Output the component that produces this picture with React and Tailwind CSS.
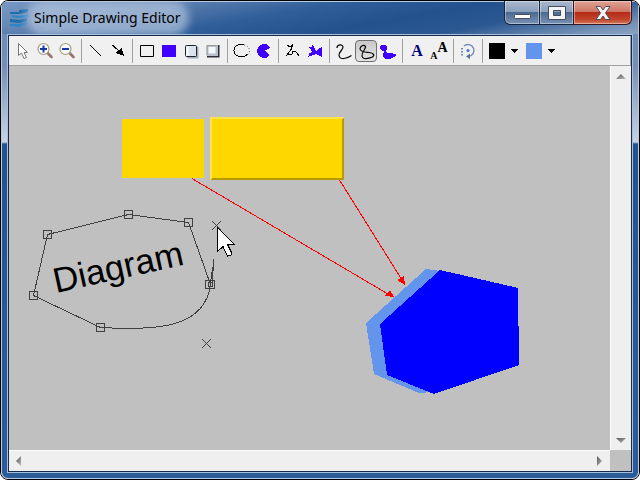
import { useState } from "react";

function Tool({ label, pressed, children }) {
  return (
    <button
      type="button"
      aria-label={label}
      title={label}
      className={
        pressed
          ? "h-[22px] w-[22px] shrink-0 rounded-sm border border-[#6e6e6e] bg-linear-to-b from-[#c9c9c9] to-[#e4e4e4]"
          : "h-[22px] w-[22px] shrink-0"
      }
    >
      <svg
        viewBox="0 0 22 22"
        className={pressed ? "-m-px block h-[22px] w-[22px] max-w-none" : "block h-[22px] w-[22px]"}
        fill="none"
        stroke="#000"
      >
        {children}
      </svg>
    </button>
  );
}

function Separator() {
  return <div className="mx-[3px] h-6 w-px shrink-0 bg-[#a0a0a0]" />;
}

function ColorButton({ label, children }) {
  return (
    <button type="button" aria-label={label} className="flex h-[22px] w-[37px] shrink-0 items-center gap-[6px] pl-[3px]">
      {children}
      <svg viewBox="0 0 7 4" className="h-1 w-[7px]" shapeRendering="crispEdges">
        <path d="M0 0H7L3.500 4Z" />
      </svg>
    </button>
  );
}

function Magnifier({ plus }) {
  return (
    <>
      <path d="M13.500 13L17.500 17" stroke="#9a7272" strokeWidth="2.600" strokeLinecap="round" />
      <circle cx="9.500" cy="9" r="5.500" fill="#f6f9ff" stroke="#a19f78" strokeWidth="1.200" />
      <path d={plus ? "M6 9H13M9.500 5.500V12.500" : "M6 9H13"} stroke="#1736a8" strokeWidth="2" />
    </>
  );
}

function Toolbar() {
  return (
    <div role="toolbar" aria-label="Drawing tools" className="flex h-[30px] items-center overflow-hidden border-b border-r border-[#a0a0a0] bg-[#f0f0f0] pl-[3px] pt-px">
      <Tool label="Select">
        <path d="M6.500 3.500V15.500L9.500 13L12 18.500L14.500 17.500L12 12.500H15.500Z" fill="#fff" stroke="#777" />
      </Tool>
      <Tool label="Zoom in"><Magnifier plus /></Tool>
      <Tool label="Zoom out"><Magnifier /></Tool>
      <Separator />
      <Tool label="Line"><path d="M5 5L16 16" shapeRendering="crispEdges" /></Tool>
      <Tool label="Arrow">
        <g shapeRendering="crispEdges">
          <path d="M5.500 5L14 13" />
          <path d="M17 16L8 13L14.500 8Z" fill="#000" stroke="none" />
        </g>
      </Tool>
      <Separator />
      <Tool label="Rectangle"><path d="M4.500 5.500H17.500V16.500H4.500Z" /></Tool>
      <Tool label="Filled rectangle"><path d="M4 5H18V17H4Z" fill="#4000ff" stroke="none" /></Tool>
      <Tool label="Shadowed rectangle">
        <rect x="7" y="6.500" width="11.500" height="12" rx="1" fill="#a5aebc" stroke="none" />
        <rect x="5.500" y="5.500" width="11" height="11" rx="1" fill="#dbe4ec" stroke="#222" />
        <path d="M7.500 7V15.500" stroke="#fff" strokeWidth="2" />
      </Tool>
      <Tool label="Bevelled rectangle">
        <rect x="5" y="5" width="12.500" height="12.500" fill="#2c3036" stroke="none" />
        <rect x="4.500" y="5" width="11.500" height="11" fill="#b9c0ca" stroke="none" />
        <path d="M5 15V5.500H15" stroke="#999" />
        <rect x="6.500" y="7" width="7" height="6.500" fill="#f5f8fb" stroke="none" />
      </Tool>
      <Separator />
      <Tool label="Arc">
        <path d="M13 4.800C9 3.500 3 5.500 3 10.500C3 15.500 9 17.500 13 16.300C14.500 16 16 15 16.500 14" shapeRendering="crispEdges" />
        <path d="M13 4.800C19.500 6 19.500 13 16.500 14.500" stroke="#555" strokeDasharray="1 2" />
      </Tool>
      <Tool label="Filled pie">
        <path d="M16 6A7 7 0 1 0 17 15L12 10.500L17 8Z" fill="#4000ff" stroke="none" shapeRendering="crispEdges" />
      </Tool>
      <Separator />
      <Tool label="Polyline">
        <path d="M5 5.500L8 6.500L10.500 5L9 9.500L5 15L10.500 14L11 11.500L14 12L17 15.500" shapeRendering="crispEdges" />
      </Tool>
      <Tool label="Polygon">
        <path d="M4 7L7 7.500L9 4.500L10.500 8L12 11L17.500 7V17L12 14L4.500 16.500L5.500 13.500L8 12L7 9.500Z" fill="#4000ff" stroke="none" shapeRendering="crispEdges" />
      </Tool>
      <Separator />
      <Tool label="Curve">
        <path d="M4 8C4 4.500 9.500 3.500 10 7C10 10 5.500 12 6 15.500C7 20.500 14 18.500 18.500 15.500" strokeWidth="1.200" />
      </Tool>
      <Tool label="Closed curve" pressed>
        <path d="M5 9C5 6 9 4 10.500 6.500C11 9 6.500 12 7 16C7.500 20 14 18.500 17.500 17C20 15 18.500 13 14 12.500C10 12 5.500 12 5 9Z" strokeWidth="1.200" />
      </Tool>
      <Tool label="Filled curve">
        <path d="M3 9V6L5 4.500H8.500L10 7V9L8.500 11L10 12.500L14 13L18.500 14.500V16L16 17.500L13 19H8L6 17V13.500L7 11.500L3 9Z" fill="#4000ff" stroke="none" shapeRendering="crispEdges" />
      </Tool>
      <Separator />
      <button type="button" aria-label="Text" className="flex h-[22px] w-[22px] shrink-0 items-center justify-center font-['Liberation_Serif',serif] text-base leading-none font-bold text-[#00007f]">A</button>
      <button type="button" aria-label="Scaled text" className="flex h-[22px] w-[22px] shrink-0 items-stretch justify-center font-['Liberation_Serif',serif] font-bold text-black">
        <span className="self-end text-[10px] leading-3">A</span>
        <span className="self-start text-sm leading-4">A</span>
      </button>
      <Separator />
      <Tool label="Rotate">
        <path d="M7 6A6 6 0 1 1 11 16.500" stroke="#7289b4" strokeWidth="1.400" />
        <path d="M13 13.500L9 16.500L13 19Z" fill="#5f6f8e" stroke="none" />
        <path d="M5 8V16" stroke="#7289b4" strokeWidth="2" strokeDasharray="1.500 1.500" />
        <circle cx="11" cy="10.500" r="1.500" fill="#4a72bd" stroke="none" />
      </Tool>
      <Separator />
      <ColorButton label="Line colour"><span className="h-4 w-4 bg-black" /></ColorButton>
      <ColorButton label="Fill colour"><span className="h-4 w-4 bg-[#6495ed]" /></ColorButton>
    </div>
  );
}

const nodes = [[47, 234], [128, 214], [188, 222], [33, 295], [100, 327]];
const controls = [[216, 225], [206, 343]];

function Drawing() {
  return (
    <svg viewBox="9 66 601 384" className="block h-[384px] w-[601px] max-w-none" shapeRendering="crispEdges" role="img" aria-label="Drawing">
      <rect x="122" y="119" width="82" height="59" fill="#ffd700" />
      <rect x="210" y="117" width="134" height="63" fill="#b89b00" />
      <path d="M210 117H344L342 119V178H212L210 180Z" fill="#ffe34d" />
      <rect x="212" y="119" width="130" height="59" fill="#ffd700" />

      <path d="M366 323L426 269L440 271L433 392L419 393L374 374Z" fill="#6495ed" />
      <path d="M380 324L440 270L518 288V326H519V365L434 394L387 375Z" fill="#00f" />

      <g stroke="#f00" fill="#f00">
        <path d="M192 178.500L388 294M339.500 180L402 280" fill="none" />
        <path d="M394 297L385 296L390 290ZM405 285L397 280L404 276Z" stroke="none" />
      </g>

      <g stroke="#404040" fill="none">
        <path d="M100.500 327.500L33.500 295.500L47.500 234.500L128.500 214.500L188.500 222.500L210.500 284.500C205 327 160 331 100.500 327.500" />
        <path d="M213.500 259V265L211.500 275L210.500 284M213.500 259L212.500 284" />
        {nodes.map(([x, y]) => (
          <rect key={x} x={x - 3.5} y={y - 3.5} width="8" height="8" />
        ))}
        <rect x="205.500" y="280.500" width="9" height="8" />
        <rect x="208.500" y="282.500" width="4" height="4" />
        {controls.map(([x, y]) => (
          <path key={x} d={`M${x - 4} ${y - 4}L${x + 5} ${y + 5}M${x + 5} ${y - 4}L${x - 4} ${y + 5}`} />
        ))}
      </g>

      <text x="56" y="293" transform="rotate(-12.5 56 293)" className="fill-black font-['Liberation_Sans',sans-serif] text-[35px]">
        Diagram
      </text>

      <path d="M217.500 227.500V251.500L223 246.500L227.500 256L231 255.500L231.500 252.500L227.500 244.500H234.500Z" fill="#fff" stroke="#000" />
    </svg>
  );
}

function ScrollArrow({ label, d }) {
  return (
    <button type="button" aria-label={label} className="flex h-[20px] w-[20px] shrink-0 items-center justify-center">
      <svg viewBox="0 0 10 10" className="h-[10px] w-[10px]">
        <defs>
          <linearGradient id="scroll-arrow" x1="0" x2="1" y2="1">
            <stop stopColor="#555" />
            <stop offset="1" stopColor="#bbb" />
          </linearGradient>
        </defs>
        <path d={d} fill="url(#scroll-arrow)" />
      </svg>
    </button>
  );
}

function TitleBar({ onToggle }) {
  const glass = "flex items-center justify-center border-[#16263f] bg-[linear-gradient(#a9b8cc_0%,#8b9fbb_48%,#4c6991_50%,#7892b4_100%)] shadow-[inset_0_0_0_1px_#ffffff66]";
  return (
    <header className="flex h-[32px] items-start justify-between bg-[linear-gradient(170deg,#7696c3_0%,#6787b6_18%,#2f5e99_42%,#24528d_60%,#2b5891_75%,#7592b7_92%,#8aa3c2_100%)] pl-[7px]">
      <div className="flex h-[32px] items-center gap-[5px]">
        <svg viewBox="0 0 20 18" className="h-[18px] w-[20px]" fill="#2f86c6">
          <path d="M1 3L10 3V1L19 0V3L10 5H1Z" fill="#1e6fab" />
          <path d="M3 6L10 7L20 5V8L10 9L3 8Z" />
          <path d="M1 10L10 11L18 9V12L10 14L1 13Z" fill="#1e6fab" />
          <path d="M1 15L10 15L18 13V15L10 18L1 17Z" />
        </svg>
        <h1 className="rounded-full bg-[#b4c6de]/70 font-['Noto_Sans','Open_Sans',sans-serif] text-[14px] leading-5 whitespace-nowrap text-black shadow-[0_0_8px_8px_#b4c6deb3]">
          Simple Drawing Editor
        </h1>
      </div>
      <div className="-mt-px flex h-[24px]">
        <button type="button" aria-label="Minimize" className={`${glass} w-[36px] rounded-bl-md border-x border-b`}>
          <svg viewBox="0 0 17 5" className="mt-2 h-[5px] w-[17px]"><rect x=".5" y=".5" width="16" height="4" rx="1" fill="#fff" stroke="#444b5a" /></svg>
        </button>
        <button type="button" aria-label="Maximize" onClick={onToggle} className={`${glass} w-[33px] border-b`}>
          <svg viewBox="0 0 18 14" className="h-[14px] w-[18px]"><path d="M.5 .5H17.500V13.500H.5ZM5.500 4.500V9.500H12.500V4.500Z" fill="#f4f4f4" fillRule="evenodd" stroke="#444b5a" /></svg>
        </button>
        <button type="button" aria-label="Close" className="flex w-[59px] items-center justify-center rounded-br-md border-x border-b border-[#3b1620] bg-[linear-gradient(#dfa394_0%,#cd7565_48%,#b42c18_50%,#c2432b_80%,#d8795a_100%)] shadow-[inset_0_0_0_1px_#ffffff66]">
          <svg viewBox="0 0 16 14" className="h-[14px] w-[16px]"><path d="M1 .5H5.500L8 4L10.500 .5H15L10.500 7L15 13.500H10.500L8 10L5.500 13.500H1L5.500 7Z" fill="#f4f4f4" stroke="#50505c" /></svg>
        </button>
        <div className="w-[6px]" />
      </div>
    </header>
  );
}

export default function App() {
  const [, setMaximized] = useState(false);
  return (
    <div className="h-screen w-full bg-white">
      <div className="flex h-full flex-col overflow-hidden rounded-lg border border-black">
        <div className="flex min-h-0 flex-1 flex-col rounded-[7px] border border-[#b7cbe2] bg-[linear-gradient(#6787b6_0px,#7390b8_64px,#c9d3e2_140px,#24528d_142px,#2c5c98_100%)]">
          <TitleBar onToggle={() => setMaximized((value) => !value)} />
          <div className="mx-[5px] mb-[5px] flex min-h-0 flex-1 flex-col border border-[#a9c0dd]">
            <div className="flex min-h-0 flex-1 flex-col border border-[#17294a]">
              <Toolbar />
              <main className="grid min-h-0 flex-1 grid-cols-[minmax(0,1fr)_21px] grid-rows-[minmax(0,1fr)_21px] bg-[#c0c0c0]">
                <div className="overflow-hidden"><Drawing /></div>
                <div className="flex flex-col items-center justify-between border-l border-white bg-[#efefef]">
                  <ScrollArrow label="Scroll up" d="M0 8L5 3L10 8Z" />
                  <ScrollArrow label="Scroll down" d="M0 3H10L5 8Z" />
                </div>
                <div className="flex items-center justify-between border-t border-white bg-[#efefef]">
                  <ScrollArrow label="Scroll left" d="M7 0V10L2 5Z" />
                  <ScrollArrow label="Scroll right" d="M2 0L7 5L2 10Z" />
                </div>
                <div />
              </main>
            </div>
          </div>
        </div>
      </div>
    </div>
  );
}
